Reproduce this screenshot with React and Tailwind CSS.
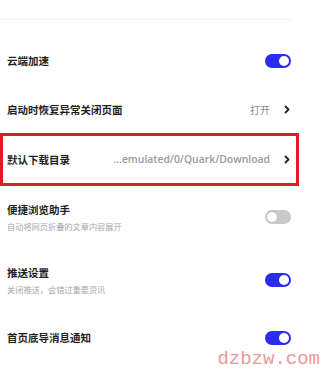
import React from "react";

const Toggle = ({ on }) =>
    on ? (
        <div className="w-[26px] h-[14px] rounded-full bg-[#2b2cf0] flex items-center justify-end pr-[2px]">
            <div className="w-[10px] h-[10px] rounded-full bg-white" />
        </div>
    ) : (
        <div className="w-[26px] h-[14px] rounded-full bg-[#c9c9c9] flex items-center justify-start pl-[1px]">
            <div className="w-[12px] h-[12px] rounded-full bg-white border border-[#bdbdbd]" />
        </div>
    );

const Chevron = () => (
    <svg width="6" height="9" viewBox="0 0 6 9" className="ml-[14px]">
        <path d="M1.5 1.5 L4.5 4.5 L1.5 7.5" fill="none" stroke="#222" strokeWidth="1.8" strokeLinecap="round" strokeLinejoin="round" />
    </svg>
);

const Title = ({ children }) => (
    <p className="text-[10.5px] leading-[14px] font-bold text-[#1f1f1f]">{children}</p>
);

const Sub = ({ children }) => (
    <p className="text-[8.2px] leading-[10px] text-[#a8a8a8] mt-[4px]">{children}</p>
);

export default function App() {
    return (
        <div
            className="relative w-[322px] h-[373px] bg-white overflow-hidden"
            style={{ fontFamily: '"Noto Sans CJK SC", "Noto Sans", sans-serif' }}
        >
            <div className="h-[19px]" />
            <div className="w-[292px] h-[1px] bg-[#f1f1f1]" />
            <div className="h-[16px]" />

            <div className="w-[299px] h-[50px] pl-[7px] pr-[8px] flex items-center justify-between">
                <Title>云端加速</Title>
                <Toggle on />
            </div>

            <div className="w-[299px] h-[47px] pl-[7px] pr-[9px] flex items-center justify-between">
                <Title>启动时恢复异常关闭页面</Title>
                <div className="flex items-center">
                    <span className="text-[10px] text-[#8a8a8a]">打开</span>
                    <Chevron />
                </div>
            </div>

            <div className="w-[299px] h-[53px] border-[3px] border-[#d81f28] pl-[4px] pr-[6px] flex items-center justify-between">
                <Title>默认下载目录</Title>
                <div className="flex items-center">
                    <span
                        className="text-[10.4px] font-semibold text-[#9a9a9a]"
                        style={{ fontFamily: '"Open Sans", "Noto Sans", sans-serif' }}
                    >
                        ...emulated/0/Quark/Download
                    </span>
                    <Chevron />
                </div>
            </div>

            <div className="w-[299px] h-[62px] pl-[7px] pr-[8px] flex items-center justify-between">
                <div>
                    <Title>便捷浏览助手</Title>
                    <Sub>自动将网页折叠的文章内容展开</Sub>
                </div>
                <Toggle on={false} />
            </div>

            <div className="w-[299px] h-[64px] pl-[7px] pr-[8px] flex items-center justify-between">
                <div>
                    <Title>推送设置</Title>
                    <Sub>关闭推送，会错过重要资讯</Sub>
                </div>
                <Toggle on />
            </div>

            <div className="w-[299px] h-[52px] pl-[7px] pr-[8px] flex items-center justify-between">
                <Title>首页底导消息通知</Title>
                <Toggle on />
            </div>

            <span
                className="absolute right-[2px] bottom-[3px] text-[19px] leading-[22px] text-[#e79a9a]"
                style={{ fontFamily: '"Liberation Mono", "DejaVu Sans Mono", monospace' }}
            >
                dzbzw.com
            </span>
        </div>
    );
}
